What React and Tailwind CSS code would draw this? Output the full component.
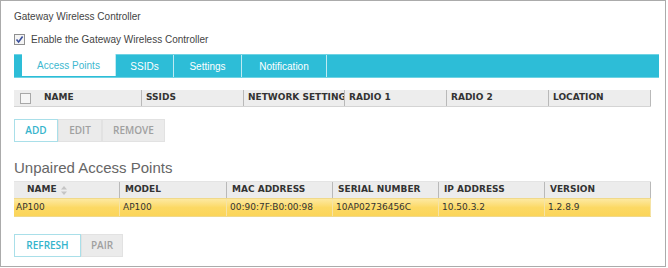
import React from "react";

const apCols = [
  { label: "NAME", w: 128 },
  { label: "SSIDS", w: 102 },
  { label: "NETWORK SETTINGS", w: 101 },
  { label: "RADIO 1", w: 102 },
  { label: "RADIO 2", w: 102 },
  { label: "LOCATION", w: 102 },
];

const unpairedCols = [
  { label: "NAME", w: 106, value: "AP100" },
  { label: "MODEL", w: 107, value: "AP100" },
  { label: "MAC ADDRESS", w: 106, value: "00:90:7F:B0:00:98" },
  { label: "SERIAL NUMBER", w: 106, value: "10AP02736456C" },
  { label: "IP ADDRESS", w: 106, value: "10.50.3.2" },
  { label: "VERSION", w: 106, value: "1.2.8.9" },
];

const tabs = [
  { label: "Access Points", w: 94, active: true },
  { label: "SSIDs", w: 58 },
  { label: "Settings", w: 68 },
  { label: "Notification", w: 85 },
];

function SortIcon() {
  return (
    <svg width="6" height="9" viewBox="0 0 6 9" className="ml-[4px]">
      <path d="M3 0 L6 3.5 L0 3.5 Z" fill="#c4c4c4" />
      <path d="M3 9 L6 5.5 L0 5.5 Z" fill="#c4c4c4" />
    </svg>
  );
}

function ActionButton({ label, primary, w }) {
  return (
    <button
      style={{ width: w, fontFamily: "'Open Sans', 'Liberation Sans', sans-serif" }}
      className={
        "h-[23px] text-[10px] font-semibold " +
        (primary
          ? "bg-white border border-[#a9dfe9] text-[#35b4cc]"
          : "bg-[#ebebeb] border border-[#e2e2e2] text-[#a0a0a0]")
      }
    >
      {label}
    </button>
  );
}

export default function App() {
  return (
    <div className="w-[668px] h-[268px] bg-white" style={{ fontFamily: "'Liberation Sans', Arial, sans-serif" }}>
      <div className="w-[666px] h-[267px] border border-[#ababab] pl-[13px] pt-[9px]">
        <div className="text-[10px] leading-[13px] text-[#444]">Gateway Wireless Controller</div>

        <label className="flex items-center mt-[9px] h-[14px] text-[10px] text-[#444]">
          <span className="w-[11px] h-[11px] border border-[#8f8f8f] bg-[#f4f4f4] flex items-center justify-center">
            <svg width="9" height="9" viewBox="0 0 9 9">
              <path d="M1.5 4.5 L3.6 7 L7.6 1.5" stroke="#3a4f9c" strokeWidth="1.6" fill="none" />
            </svg>
          </span>
          <span className="ml-[6px]">Enable the Gateway Wireless Controller</span>
        </label>

        <div className="mt-[8px] w-[645px] h-[24px] bg-[#2dbdd7] border-y border-[#6fd3e4] flex pl-[8px]">
          {tabs.map((t) => (
            <div
              key={t.label}
              style={{ width: t.w }}
              className={
                "h-full flex items-center justify-center text-[10px] border-r border-[#bfeaf2] " +
                (t.active ? "bg-white text-[#3cb8cf] -mt-px h-[24px]" : "text-white")
              }
            >
              {t.label}
            </div>
          ))}
        </div>

        <div
          className="mt-[12px] w-[637px] h-[17px] flex bg-[#ededed] border-b border-[#d4d4d4] text-[9px] font-bold text-[#333]"
          style={{ fontFamily: "'DejaVu Sans', Verdana, sans-serif" }}
        >
          {apCols.map((c, i) => (
            <div
              key={c.label}
              style={{ width: c.w }}
              className={
                "h-full flex items-center overflow-hidden whitespace-nowrap border-r border-[#b9b9b9] " +
                (i === 0 ? "pl-[6px]" : "pl-[4px]")
              }
            >
              {i === 0 && (
                <span className="w-[11px] h-[11px] border border-[#a8a8a8] bg-[#f6f6f6] mr-[13px] shrink-0" />
              )}
              {c.label}
            </div>
          ))}
        </div>

        <div className="mt-[12px] flex">
          <ActionButton label="ADD" primary w={44} />
          <ActionButton label="EDIT" w={44} />
          <ActionButton label="REMOVE" w={63} />
        </div>

        <div className="mt-[17px] text-[15px] leading-[18px] text-[#666]">Unpaired Access Points</div>

        <div
          className="mt-[4px] w-[637px] text-[9px] text-[#333]"
          style={{ fontFamily: "'DejaVu Sans', Verdana, sans-serif" }}
        >
          <div className="h-[17px] flex bg-[#ececec] border-t border-[#e4e4e4] font-bold">
            {unpairedCols.map((c, i) => (
              <div
                key={c.label}
                style={{ width: c.w }}
                className={
                  "h-full flex items-center whitespace-nowrap border-r border-[#b9b9b9] " +
                  (i === 0 ? "pl-[13px]" : "pl-[5px]")
                }
              >
                {c.label}
                {i === 0 && <SortIcon />}
              </div>
            ))}
          </div>
          <div className="h-[19px] flex bg-gradient-to-b from-[#fde9a0] via-[#fcd964] to-[#fbd55a] border-y border-[#f0d98a]">
            {unpairedCols.map((c, i) => (
              <div
                key={c.label}
                style={{ width: c.w }}
                className={
                  "h-full flex items-center whitespace-nowrap border-r border-[#f5e3a6] " +
                  (i === 0 ? "pl-[2px]" : "pl-[3px]")
                }
              >
                {c.value}
              </div>
            ))}
          </div>
        </div>

        <div className="mt-[17px] flex">
          <ActionButton label="REFRESH" primary w={67} />
          <ActionButton label="PAIR" w={42} />
        </div>
      </div>
    </div>
  );
}
